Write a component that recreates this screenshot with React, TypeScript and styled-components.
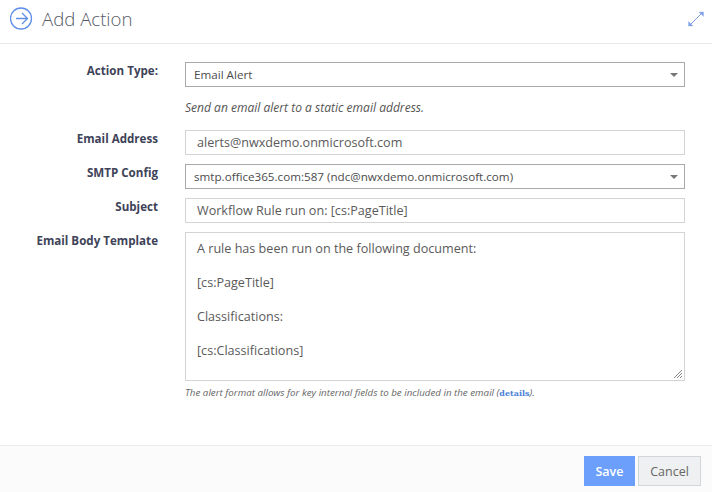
import { FC, ReactNode } from 'react';
import styled, { createGlobalStyle } from 'styled-components';

const GlobalStyle = createGlobalStyle`
  html, body {
    margin: 0;
    padding: 0;
    background: #ffffff;
  }
  body {
    font-family: 'Open Sans', 'Noto Sans', sans-serif;
  }
`;

const Dialog = styled.div`
  width: 712px;
  height: 492px;
  display: flex;
  flex-direction: column;
  overflow: hidden;
`;

const Header = styled.header`
  height: 44px;
  box-sizing: border-box;
  flex: none;
  display: flex;
  align-items: center;
  padding: 0 7px 6px 10px;
  border-bottom: 1px solid #e9e9e9;
`;

const Title = styled.h1`
  flex: 1;
  margin: 0 0 0 9px;
  font-size: 18.6px;
  font-weight: 300;
  color: #555a66;
`;

const Form = styled.form`
  flex: 1;
  display: flex;
  flex-direction: column;
  padding-top: 18px;
`;

const Row = styled.div<{ $gap?: number }>`
  display: grid;
  grid-template-columns: 158px 500px;
  column-gap: 27px;
  margin-bottom: ${(p) => p.$gap ?? 9}px;
`;

const Label = styled.label`
  padding-top: 1px;
  text-align: right;
  font-size: 11.6px;
  font-weight: 700;
  line-height: 16px;
  color: #3e4358;
`;

const Select = styled.div`
  position: relative;
  height: 25px;
  box-sizing: border-box;
  padding: 0 8px;
  border: 1px solid #a9a9a9;
  background: #fff;
  font-size: 11.65px;
  line-height: 24px;
  color: #4c4c4c;
  &::after {
    content: '';
    position: absolute;
    right: 6px;
    top: 10px;
    border-left: 4px solid transparent;
    border-right: 4px solid transparent;
    border-top: 4px solid #777;
  }
`;

const Input = styled.div`
  height: 25px;
  box-sizing: border-box;
  padding: 0 11px;
  border: 1px solid #d4d4d4;
  background: #fff;
  font-size: 12.6px;
  line-height: 23px;
  color: #5a5a5a;
`;

const TextArea = styled.div`
  position: relative;
  height: 149px;
  box-sizing: border-box;
  padding: 7px 11px;
  border: 1px solid #d4d4d4;
  background: #fff;
  font-size: 12.6px;
  line-height: 17px;
  color: #5a5a5a;
`;

const Grip = styled.svg`
  position: absolute;
  right: 1px;
  bottom: 1px;
`;

const Hint = styled.p`
  margin: 13px 0 0;
  font-size: 12.05px;
  font-style: italic;
  line-height: 16px;
  color: #555;
`;

const HelpText = styled.p`
  margin: 6px 0 0;
  font-size: 9.75px;
  font-style: italic;
  line-height: 12px;
  color: #666;
`;

const DetailsLink = styled.a`
  font-family: 'DejaVu Serif', 'Liberation Serif', serif;
  font-style: normal;
  font-weight: 700;
  font-size: 8px;
  color: #4a80d8;
`;

const Footer = styled.footer`
  height: 47px;
  box-sizing: border-box;
  flex: none;
  display: flex;
  justify-content: flex-end;
  gap: 3px;
  padding: 10px 11px 0 0;
  background: #fbfbfb;
  border-top: 1px solid #ececec;
`;

const Button = styled.button<{ $primary?: boolean }>`
  height: 30px;
  box-sizing: border-box;
  padding: 0;
  width: ${(p) => (p.$primary ? 51 : 63)}px;
  border: 1px solid ${(p) => (p.$primary ? '#6b9ffb' : '#d3d6d8')};
  background: ${(p) => (p.$primary ? '#6b9ffb' : '#eef0f1')};
  color: ${(p) => (p.$primary ? '#fff' : '#666')};
  font-family: inherit;
  font-size: 12.5px;
  font-weight: ${(p) => (p.$primary ? 600 : 400)};
`;

const Field: FC<{ label: string; gap?: number; children: ReactNode }> = ({ label, gap, children }) => (
  <Row $gap={gap}>
    <Label>{label}</Label>
    <div>{children}</div>
  </Row>
);

export default function App() {
  return (
    <>
      <GlobalStyle />
      <Dialog>
        <Header>
          <svg width="23" height="23" viewBox="0 0 23 23" fill="none" stroke="#5f8fe8">
            <circle cx="11" cy="11.5" r="10.5" strokeWidth="1.3" />
            <path d="M6 11.5h11M12 6l5.5 5.5-5.5 5.5" strokeWidth="1.3" />
          </svg>
          <Title>Add Action</Title>
          <svg width="18" height="18" viewBox="0 0 18 18" fill="#7f9fe6" stroke="#7f9fe6">
            <path d="M3 15L15 3" strokeWidth="1" fill="none" />
            <path d="M12 2H16.5V6.5L14.5 4.5L13.5 3.5Z" strokeWidth="0.3" />
            <path d="M1.5 11.5V16H6L4.5 14.5L3.5 13.5Z" strokeWidth="0.3" />
          </svg>
        </Header>
        <Form>
          <Field label="Action Type:" gap={14}>
            <Select>Email Alert</Select>
            <Hint>Send an email alert to a static email address.</Hint>
          </Field>
          <Field label="Email Address">
            <Input>alerts@nwxdemo.onmicrosoft.com</Input>
          </Field>
          <Field label="SMTP Config">
            <Select>smtp.office365.com:587 (ndc@nwxdemo.onmicrosoft.com)</Select>
          </Field>
          <Field label="Subject">
            <Input>Workflow Rule run on: [cs:PageTitle]</Input>
          </Field>
          <Field label="Email Body Template">
            <TextArea>
              A rule has been run on the following document:
              <br />
              <br />
              [cs:PageTitle]
              <br />
              <br />
              Classifications:
              <br />
              <br />
              [cs:Classifications]
              <Grip width="10" height="10" viewBox="0 0 10 10" stroke="#777">
                <path d="M1 9L9 1M4 9L9 4M7 9L9 7" strokeWidth="0.9" />
              </Grip>
            </TextArea>
            <HelpText>
              The alert format allows for key internal fields to be included in the email (
              <DetailsLink>details</DetailsLink>).
            </HelpText>
          </Field>
        </Form>
        <Footer>
          <Button $primary>Save</Button>
          <Button>Cancel</Button>
        </Footer>
      </Dialog>
    </>
  );
}
